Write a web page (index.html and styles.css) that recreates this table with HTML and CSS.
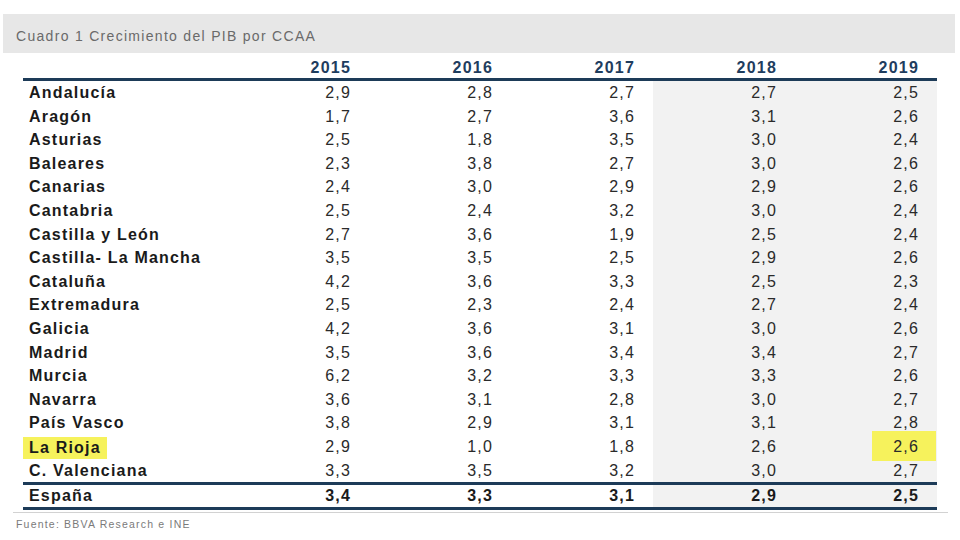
FILE: index.html
```html
<!DOCTYPE html>
<html lang="es">
<head>
<meta charset="utf-8">
<title>Cuadro 1 Crecimiento del PIB por CCAA</title>
<link rel="stylesheet" href="styles.css">
</head>
<body>
<div class="caption">Cuadro 1 Crecimiento del PIB por CCAA</div>
<table class="gdp">
  <colgroup>
    <col class="c-label"><col class="c-num"><col class="c-num"><col class="c-num"><col class="c-num"><col class="c-num">
  </colgroup>
  <thead>
    <tr><th></th><th>2015</th><th>2016</th><th>2017</th><th>2018</th><th>2019</th></tr>
  </thead>
  <tbody>
    <tr><td>Andalucía</td><td>2,9</td><td>2,8</td><td>2,7</td><td class="sh">2,7</td><td class="sh">2,5</td></tr>
    <tr><td>Aragón</td><td>1,7</td><td>2,7</td><td>3,6</td><td class="sh">3,1</td><td class="sh">2,6</td></tr>
    <tr><td>Asturias</td><td>2,5</td><td>1,8</td><td>3,5</td><td class="sh">3,0</td><td class="sh">2,4</td></tr>
    <tr><td>Baleares</td><td>2,3</td><td>3,8</td><td>2,7</td><td class="sh">3,0</td><td class="sh">2,6</td></tr>
    <tr><td>Canarias</td><td>2,4</td><td>3,0</td><td>2,9</td><td class="sh">2,9</td><td class="sh">2,6</td></tr>
    <tr><td>Cantabria</td><td>2,5</td><td>2,4</td><td>3,2</td><td class="sh">3,0</td><td class="sh">2,4</td></tr>
    <tr><td>Castilla y León</td><td>2,7</td><td>3,6</td><td>1,9</td><td class="sh">2,5</td><td class="sh">2,4</td></tr>
    <tr><td>Castilla- La Mancha</td><td>3,5</td><td>3,5</td><td>2,5</td><td class="sh">2,9</td><td class="sh">2,6</td></tr>
    <tr><td>Cataluña</td><td>4,2</td><td>3,6</td><td>3,3</td><td class="sh">2,5</td><td class="sh">2,3</td></tr>
    <tr><td>Extremadura</td><td>2,5</td><td>2,3</td><td>2,4</td><td class="sh">2,7</td><td class="sh">2,4</td></tr>
    <tr><td>Galicia</td><td>4,2</td><td>3,6</td><td>3,1</td><td class="sh">3,0</td><td class="sh">2,6</td></tr>
    <tr><td>Madrid</td><td>3,5</td><td>3,6</td><td>3,4</td><td class="sh">3,4</td><td class="sh">2,7</td></tr>
    <tr><td>Murcia</td><td>6,2</td><td>3,2</td><td>3,3</td><td class="sh">3,3</td><td class="sh">2,6</td></tr>
    <tr><td>Navarra</td><td>3,6</td><td>3,1</td><td>2,8</td><td class="sh">3,0</td><td class="sh">2,7</td></tr>
    <tr><td>País Vasco</td><td>3,8</td><td>2,9</td><td>3,1</td><td class="sh">3,1</td><td class="sh">2,8</td></tr>
    <tr><td><span class="hl-label">La Rioja</span></td><td>2,9</td><td>1,0</td><td>1,8</td><td class="sh">2,6</td><td class="sh"><span class="hl-num">2,6</span></td></tr>
    <tr><td>C. Valenciana</td><td>3,3</td><td>3,5</td><td>3,2</td><td class="sh">3,0</td><td class="sh">2,7</td></tr>
  </tbody>
  <tfoot>
    <tr><td>España</td><td>3,4</td><td>3,3</td><td>3,1</td><td class="sh">2,9</td><td class="sh">2,5</td></tr>
  </tfoot>
</table>
<div class="rule"></div>
<div class="source">Fuente: BBVA Research e INE</div>
</body>
</html>
```

FILE: styles.css
```css
html, body {
  margin: 0;
  padding: 0;
  background: #ffffff;
}

body {
  padding-top: 14px;
  font-family: "Liberation Sans", Arial, sans-serif;
  color: #1c1c1c;
}

.caption {
  margin-left: 3px;
  width: 952px;
  height: 39px;
  box-sizing: border-box;
  padding: 13px 0 0 13px;
  background: #e7e7e7;
  color: #6a6a6a;
  font-size: 14px;
  line-height: 18px;
  letter-spacing: 1.3px;
}

.gdp {
  margin: 5px 0 0 23px;
  width: 914px;
  table-layout: fixed;
  border-collapse: separate;
  border-spacing: 0;
  font-size: 16px;
  letter-spacing: 1.2px;
}

.c-label { width: 204px; }
.c-num { width: 142px; }

.gdp th,
.gdp td {
  padding: 0 18px 0 0;
  text-align: right;
  white-space: nowrap;
}

.gdp th:first-child,
.gdp td:first-child {
  padding-left: 6px;
  padding-right: 0;
  text-align: left;
  font-weight: bold;
  color: #1a1a1a;
}

.gdp thead th {
  height: 20px;
  line-height: 20px;
  font-weight: bold;
  color: #1e3d5e;
  border-bottom: 3px solid #1d3b58;
}

.gdp tbody tr {
  height: 23.6px;
}

.gdp tbody td {
  padding-top: 1px;
  line-height: 22.6px;
  color: #2a2a2a;
}

.gdp tfoot td {
  height: 22px;
  line-height: 22px;
  font-weight: bold;
  color: #1a1a1a;
  border-top: 3px solid #1d3b58;
  border-bottom: 3px solid #1d3b58;
}

.gdp .sh {
  background: #f2f2f2;
}

.hl-label {
  display: inline-block;
  margin-left: -6px;
  padding: 0 6px;
  height: 22px;
  line-height: 22px;
  vertical-align: middle;
  background: #f6f25c;
}

.hl-num {
  position: relative;
  z-index: 0;
}

.hl-num::before {
  content: "";
  position: absolute;
  top: -7px;
  bottom: -6px;
  left: -21px;
  right: -17px;
  background: #f6f25c;
  z-index: -1;
}

.rule {
  margin: 2px 0 0 13px;
  width: 935px;
  height: 1px;
  background: #d2d2d2;
}

.source {
  margin: 4px 0 0 16px;
  font-size: 10.5px;
  line-height: 14px;
  letter-spacing: 1.2px;
  color: #7a7a7a;
}
```
